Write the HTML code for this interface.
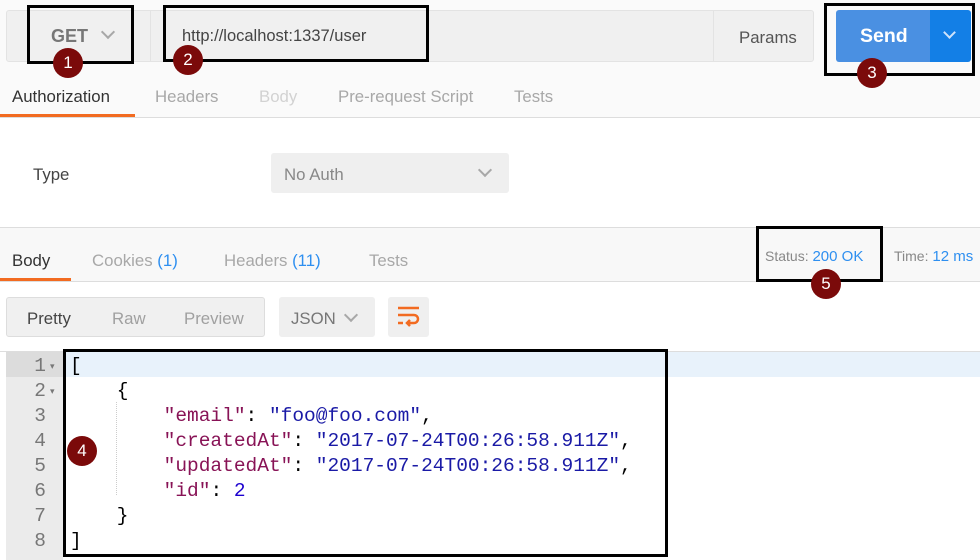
<!DOCTYPE html>
<html><head><meta charset="utf-8"><style>
*{margin:0;padding:0;box-sizing:border-box}
body{width:980px;height:560px;overflow:hidden;background:#fff;font-family:"Liberation Sans",sans-serif;position:relative}
.a{position:absolute}
.t{position:absolute;white-space:nowrap}
.box{position:absolute;border:3px solid #000}
.c{position:absolute;width:30px;height:30px;border-radius:50%;background:#7b0a0a;color:#fff;font-size:17px;text-align:center;line-height:30px;margin:-15px 0 0 -15px}
.chev{position:absolute;width:10px;height:10px;border-right:2px solid #a8a8a8;border-bottom:2px solid #a8a8a8;transform:rotate(45deg)}
.code{position:absolute;left:70px;font-family:"Liberation Mono",monospace;font-size:19.5px;white-space:pre;line-height:25px}
.ln{position:absolute;left:6px;width:40px;text-align:right;font-family:"Liberation Mono",monospace;font-size:19.5px;color:#777;line-height:25px}
.k{color:#881356}.s{color:#1a1aa6}.n{color:#1c00cf}
.f{font-size:16.8px}
</style></head><body>
<div class="a" style="left:0;top:0;width:980px;height:118px;background:#fafafa"></div>
<div class="a" style="left:6px;top:10px;width:808px;height:52px;background:#f0f0f0;border:1px solid #e3e3e3;border-radius:3px"></div>
<div class="a" style="left:150px;top:10px;width:1px;height:52px;background:#e3e3e3"></div>
<div class="a" style="left:713px;top:10px;width:1px;height:52px;background:#e3e3e3"></div>
<div class="t" style="left:51px;top:26px;font-size:18px;font-weight:bold;color:#777">GET</div>
<div class="chev" style="left:103px;top:27px"></div>
<div class="t" style="left:182px;top:27px;font-size:16.5px;color:#444">http://localhost:1337/user</div>
<div class="t f" style="left:739px;top:28px;color:#555">Params</div>
<div class="a" style="left:836px;top:10px;width:94px;height:52px;background:#4a90e2;border-radius:3px 0 0 3px"></div>
<div class="a" style="left:930px;top:10px;width:41px;height:52px;background:#137fe6;border-radius:0 3px 3px 0"></div>
<div class="t" style="left:860px;top:25px;font-size:19.5px;font-weight:bold;color:#fff">Send</div>
<div class="chev" style="left:945px;top:28px;border-color:#cfe3fa;width:9px;height:9px"></div>

<div class="t f" style="left:12px;top:87px;color:#333">Authorization</div>
<div class="t f" style="left:155px;top:87px;color:#a8a8a8">Headers</div>
<div class="t f" style="left:259px;top:87px;color:#d2d2d2">Body</div>
<div class="t f" style="left:338px;top:87px;color:#a8a8a8">Pre-request Script</div>
<div class="t f" style="left:514px;top:87px;color:#a8a8a8">Tests</div>
<div class="a" style="left:0;top:114px;width:135px;height:3px;background:#f26b21"></div>
<div class="a" style="left:0;top:117px;width:980px;height:1px;background:#ddd"></div>

<div class="t f" style="left:33px;top:165px;color:#444">Type</div>
<div class="a" style="left:271px;top:153px;width:238px;height:40px;background:#efefef;border-radius:3px"></div>
<div class="t f" style="left:284px;top:165px;color:#888">No Auth</div>
<div class="chev" style="left:480px;top:165px"></div>

<div class="a" style="left:0;top:227px;width:980px;height:55px;background:#f8f8f8;border-top:1px solid #ddd;border-bottom:1px solid #ddd"></div>
<div class="t f" style="left:12px;top:251px;color:#333">Body</div>
<div class="t f" style="left:92px;top:251px;color:#a8a8a8">Cookies <span style="color:#2e8ff0">(1)</span></div>
<div class="t f" style="left:224px;top:251px;color:#a8a8a8">Headers <span style="color:#2e8ff0">(11)</span></div>
<div class="t f" style="left:369px;top:251px;color:#a8a8a8">Tests</div>
<div class="a" style="left:0;top:278px;width:71px;height:3px;background:#f26b21"></div>
<div class="t" style="left:765px;top:248px;font-size:14px;color:#888">Status: <span style="color:#2e8ff0;font-size:15px">200 OK</span></div>
<div class="t" style="left:894px;top:248px;font-size:14px;color:#888">Time: <span style="color:#2e8ff0;font-size:15px">12 ms</span></div>

<div class="a" style="left:6px;top:297px;width:259px;height:40px;background:#f0f0f0;border:1px solid #ddd;border-radius:3px"></div>
<div class="t f" style="left:27px;top:309px;color:#444">Pretty</div>
<div class="t f" style="left:112px;top:309px;color:#a0a0a0">Raw</div>
<div class="t f" style="left:184px;top:309px;color:#a0a0a0">Preview</div>
<div class="a" style="left:279px;top:297px;width:96px;height:40px;background:#efefef;border-radius:3px"></div>
<div class="t f" style="left:291px;top:309px;color:#777">JSON</div>
<div class="chev" style="left:346px;top:310px"></div>
<div class="a" style="left:388px;top:297px;width:41px;height:40px;background:#efefef;border-radius:3px"></div>
<svg class="a" style="left:396px;top:305px" width="26" height="24" viewBox="0 0 26 24"><g stroke="#f26b21" stroke-width="2.5" fill="none"><path d="M2 3H23M2 10H18a4 4 0 0 1 0 8H12M2 18H7"/><path d="M14 15l-3 3 3 3"/></g></svg>

<div class="a" style="left:0;top:351px;width:980px;height:1px;background:#ddd"></div>
<div class="a" style="left:6px;top:352px;width:57px;height:208px;background:#ebebeb"></div>
<div class="a" style="left:6px;top:352px;width:57px;height:25px;background:#dcdcdc"></div>
<div class="a" style="left:63px;top:352px;width:917px;height:25px;background:#e8f2fb"></div>
<div class="a" style="left:116px;top:402px;width:0;height:93px;border-left:1px dotted #ccc"></div>
<div class="ln" style="top:354px">1<br>2<br>3<br>4<br>5<br>6<br>7<br>8</div>
<div class="t" style="left:50px;top:354px;font-size:9px;color:#777;line-height:25px">▾<br>▾</div>
<div class="code" style="top:354px;color:#000">[
    {
        <span class="k">"email"</span>: <span class="s">"foo@foo.com"</span>,
        <span class="k">"createdAt"</span>: <span class="s">"2017-07-24T00:26:58.911Z"</span>,
        <span class="k">"updatedAt"</span>: <span class="s">"2017-07-24T00:26:58.911Z"</span>,
        <span class="k">"id"</span>: <span class="n">2</span>
    }
]</div>

<div class="box" style="left:27px;top:5px;width:107px;height:59px"></div>
<div class="box" style="left:163px;top:5px;width:266px;height:57px"></div>
<div class="box" style="left:824px;top:3px;width:151px;height:73px"></div>
<div class="box" style="left:756px;top:226px;width:127px;height:56px"></div>
<div class="box" style="left:63px;top:349px;width:605px;height:208px"></div>
<div class="c" style="left:68px;top:63px">1</div>
<div class="c" style="left:188px;top:60px">2</div>
<div class="c" style="left:872px;top:73px">3</div>
<div class="c" style="left:82px;top:451px">4</div>
<div class="c" style="left:826px;top:284px">5</div>
</body></html>
